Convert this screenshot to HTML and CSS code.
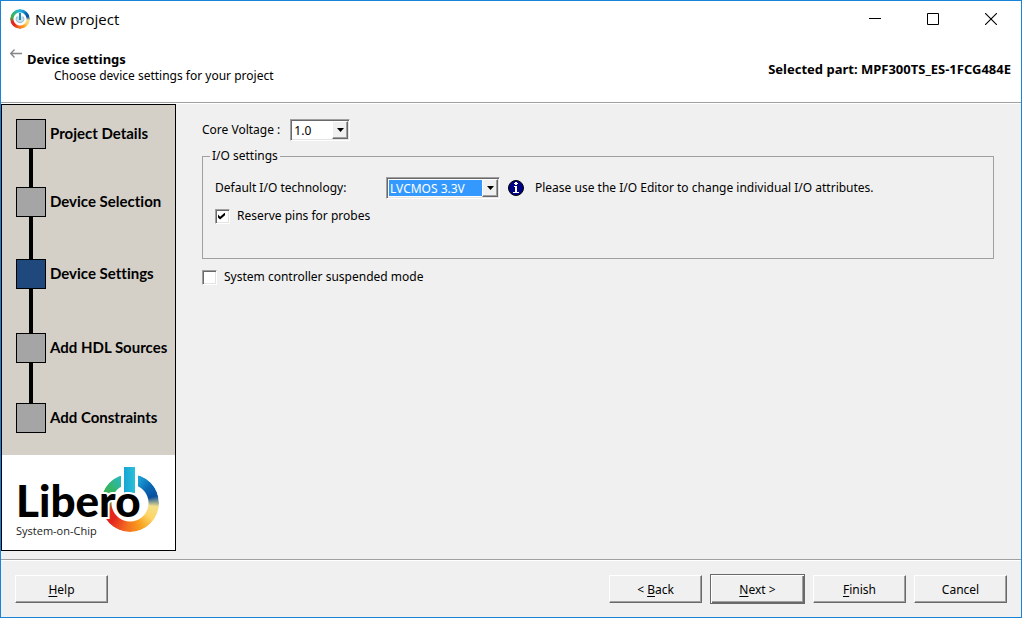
FILE: index.html
```html
<!DOCTYPE html>
<html lang="en">
<head>
<meta charset="utf-8">
<title>New project</title>
<link rel="stylesheet" href="styles.css">
</head>
<body>
<div class="window">
  <div class="titlebar">
    <span class="app-icon">
      <span class="ring ring-small"></span>
      <svg class="app-power" width="20" height="20" viewBox="0 0 20 20" aria-hidden="true"><path d="M7 7.500a4 4 0 0 0 .5 5.500q2.500 1.500 5 0a4 4 0 0 0 .5-5.500" fill="#c9dfe8" stroke="#8fbcd2" stroke-width="1"/><path d="M10 4v7" stroke="#1a8cba" stroke-width="2"/></svg>
    </span>
    <span class="title">New project</span>
    <div class="caption-buttons">
      <button class="caption" aria-label="Minimize"><svg width="12" height="12" viewBox="0 0 12 12"><path d="M0 5.500h12" stroke="#000"/></svg></button>
      <button class="caption" aria-label="Maximize"><svg width="12" height="12" viewBox="0 0 12 12"><path d="M.5.5h11v11H.5z" fill="none" stroke="#000"/></svg></button>
      <button class="caption" aria-label="Close"><svg width="12" height="12" viewBox="0 0 12 12"><path d="M0 0l12 12M12 0L0 12" stroke="#000" stroke-width="1.100"/></svg></button>
    </div>
  </div>
  <header class="header">
    <button class="back-arrow" aria-label="Go back"><svg width="12" height="9" viewBox="0 0 12 9"><path d="M.8 4.500H12M4.500.5l-3.800 4 3.800 4" fill="none" stroke="#858585" stroke-width="1.300"/></svg></button>
    <div class="heading">
      <h1>Device settings</h1>
      <p>Choose device settings for your project</p>
    </div>
    <div class="part">Selected part: MPF300TS_ES-1FCG484E</div>
  </header>
  <div class="body">
    <aside class="sidebar">
      <ol class="steps">
        <li class="step"><span class="box"></span>Project Details</li>
        <li class="step gap-s"><span class="box"></span>Device Selection</li>
        <li class="step gap-l current"><span class="box"></span>Device Settings</li>
        <li class="step gap-xl"><span class="box"></span>Add HDL Sources</li>
        <li class="step gap-m"><span class="box"></span>Add Constraints</li>
      </ol>
      <div class="logo">
        <span class="ring ring-large"></span>
        <span class="power-bar"></span>
        <div class="wordmark">Libero</div>
        <div class="tagline">System-on-Chip</div>
      </div>
    </aside>
    <main class="content">
      <div class="row voltage">
        <label for="voltage">Core Voltage :</label>
        <span class="combo combo-small">
          <select id="voltage"><option>1.0</option></select>
          <span class="drop"><svg width="7" height="4" viewBox="0 0 7 4"><path d="M0 0h7L3.500 4z"/></svg></span>
        </span>
      </div>
      <fieldset class="group">
        <legend>I/O settings</legend>
        <div class="row tech">
          <label for="tech">Default I/O technology:</label>
          <span class="combo combo-wide focused">
            <select id="tech"><option>LVCMOS 3.3V</option></select>
            <span class="drop"><svg width="7" height="4" viewBox="0 0 7 4"><path d="M0 0h7L3.500 4z"/></svg></span>
          </span>
          <svg class="info" width="16" height="16" viewBox="0 0 16 16" aria-hidden="true"><circle cx="8" cy="8" r="7.500" fill="#000084" stroke="#000"/><path d="M7 2h2v1h1v1H9v1H7V4H6V3h1zM6 6h3v6h2v1H5v-1h2V7H6z" fill="#fff"/></svg>
          <span>Please use the I/O Editor to change individual I/O attributes.</span>
        </div>
        <label class="row check"><input type="checkbox" checked>Reserve pins for probes</label>
      </fieldset>
      <label class="row check"><input type="checkbox">System controller suspended mode</label>
    </main>
  </div>
  <footer class="footer">
    <button class="btn help"><u>H</u>elp</button>
    <button class="btn">&lt; <u>B</u>ack</button>
    <button class="btn default"><u>N</u>ext &gt;</button>
    <button class="btn"><u>F</u>inish</button>
    <button class="btn">Cancel</button>
  </footer>
</div>
</body>
</html>
```
FILE: styles.css
```css
* { box-sizing: border-box; }
body { margin: 0; }
.window {
  min-height: 100vh;
  display: flex;
  flex-direction: column;
  border: 1px solid #1883d7;
  background: #f0f0f0;
  color: #000;
  font: 12px/16px "Noto Sans", sans-serif;
}
button, select { font: inherit; color: inherit; }
.titlebar {
  display: flex;
  align-items: center;
  height: 36px;
  padding: 0 1px 0 9px;
  gap: 5px;
  background: #fff;
}
.app-icon { position: relative; width: 20px; height: 20px; }
.app-power { position: absolute; inset: 0; }
.title { font: 15px/20px "Open Sans", sans-serif; }
.caption-buttons { display: flex; margin-left: auto; }
.caption {
  display: flex;
  align-items: center;
  justify-content: center;
  width: 58px;
  height: 36px;
  padding: 0;
  border: 0;
  background: none;
}
.ring {
  position: absolute;
  border-radius: 50%;
  background: conic-gradient(#20b4dc 0deg, #1c9fd6 20deg, #0a68b2 50deg, #0a4f9f 75deg, #f3e08a 98deg, #fdd566 125deg, #f8a01e 155deg, #f36a21 190deg, #e5261f 225deg, #e5261f 250deg, #3fae49 280deg, #35b66c 310deg, #2ab8b0 335deg, #20b4dc 360deg);
}
.ring-small { inset: 0; mask: radial-gradient(circle, transparent 6px, #000 7px); }
.header {
  display: flex;
  align-items: flex-start;
  height: 66px;
  padding: 12px 10px 0 9px;
  background: #fff;
  border-bottom: 1px solid #a0a0a0;
}
.back-arrow { display: flex; padding: 0; border: 0; background: none; width: 12px; }
.heading { margin: 2px 0 0 5px; }
.heading h1 { margin: 0; font-size: 13px; line-height: 16px; }
.heading p { margin: 1px 0 0 27px; }
.part { margin: 12px 0 0 auto; font-size: 13px; font-weight: bold; }
.body { display: flex; flex: 1; align-items: flex-start; border-top: 1px solid #fff; }
.sidebar { width: 175px; border: 1px solid #000; background: #fff; }
.steps {
  margin: 0;
  padding: 14px 0 22px 14px;
  list-style: none;
  background: #d4d0c8;
  font: bold 15px/28px Lato, sans-serif;
  font-variant-ligatures: none;
}
.step { display: flex; flex-wrap: wrap; column-gap: 4px; }
.step::before { content: ""; flex-basis: 100%; height: 0; background: linear-gradient(#000, #000) 13px 0 / 4px 100% no-repeat; }
.gap-s::before { height: 38px; }
.gap-m::before { height: 40px; }
.gap-l::before { height: 42px; }
.gap-xl::before { height: 44px; }
.box { width: 30px; height: 30px; border: 1px solid #000; background: #a5a5a5; }
.current .box { background: #1f497d; }
.logo { position: relative; height: 95px; padding: 20px 0 0 14px; }
.ring-large { left: 99px; top: 19px; width: 58px; height: 58px; mask: radial-gradient(circle, transparent 18px, #000 19px); }
.power-bar { position: absolute; left: 119px; top: 9px; width: 17px; height: 32px; border: 3px solid #fff; background: linear-gradient(90deg, #16a5d5, #2bc0d8); }
.wordmark {
  position: relative;
  font: 900 44px/50px Lato, sans-serif;
  -webkit-text-stroke: 4px #fff;
  paint-order: stroke fill;
}
.tagline { position: relative; font: 11px/12px "Open Sans", sans-serif; color: #222; }
.content { flex: 1; padding: 15px 27px 0 26px; }
.row { display: flex; align-items: center; }
.voltage { gap: 10px; }
.combo {
  position: relative;
  display: flex;
  height: 22px;
  padding: 1px;
  background: #fff;
  border: 1px solid;
  border-color: #a0a0a0 #fff #fff #a0a0a0;
  box-shadow: inset 1px 1px #696969, inset -1px -1px #e3e3e3;
}
.combo-small { width: 60px; }
.combo-wide { width: 114px; }
.combo select {
  appearance: none;
  flex: 1;
  margin: 1px;
  padding: 1px 17px 0 1px;
  border: 0;
  border-radius: 0;
  background: transparent;
}
.focused select { background: #3399ff; color: #fff; }
.drop {
  position: absolute;
  top: 1px;
  right: 1px;
  bottom: 1px;
  width: 16px;
  display: flex;
  align-items: center;
  justify-content: center;
  background: #f0f0f0;
  border: 1px solid;
  border-color: #fff #696969 #696969 #fff;
  box-shadow: inset -1px -1px #a0a0a0;
  pointer-events: none;
}
.group {
  min-width: 0;
  height: 111px;
  margin: 7px 0 10px;
  padding: 13px 12px;
  border: 1px solid #a0a0a0;
}
.group legend { margin-left: -5px; padding: 0 2px; }
.tech { margin-bottom: 9px; }
.tech label { width: 171px; }
.info { margin: 0 11px 0 8px; }
.check { gap: 7px; }
.check input {
  appearance: none;
  display: grid;
  width: 15px;
  height: 15px;
  margin: 0;
  background: #fff;
  border: 1px solid;
  border-color: #a0a0a0 #fff #fff #a0a0a0;
  box-shadow: inset 1px 1px #696969, inset -1px -1px #e3e3e3;
}
.check input:checked::before {
  content: "";
  width: 7px;
  height: 7px;
  margin: 3px 0 0 2px;
  background: #000;
  clip-path: polygon(0 30%, 30% 60%, 100% 0, 100% 40%, 30% 100%, 0 72%);
}
.footer {
  display: flex;
  align-items: center;
  gap: 8px;
  height: 58px;
  padding: 0 14px;
  border-top: 1px solid #a0a0a0;
  box-shadow: inset 0 1px #fff;
}
.btn {
  width: 93px;
  height: 28px;
  padding: 2px 0 0;
  background: #f0f0f0;
  border: 1px solid;
  border-color: #fff #696969 #696969 #fff;
  box-shadow: inset -1px -1px #a0a0a0;
}
.btn u { text-underline-offset: 2px; }
.help { margin-right: auto; }
.default {
  width: 95px;
  height: 30px;
  border-color: #696969;
  box-shadow: inset 1px 1px #fff, inset -1px -1px #696969, inset -2px -2px #a0a0a0;
}
```
